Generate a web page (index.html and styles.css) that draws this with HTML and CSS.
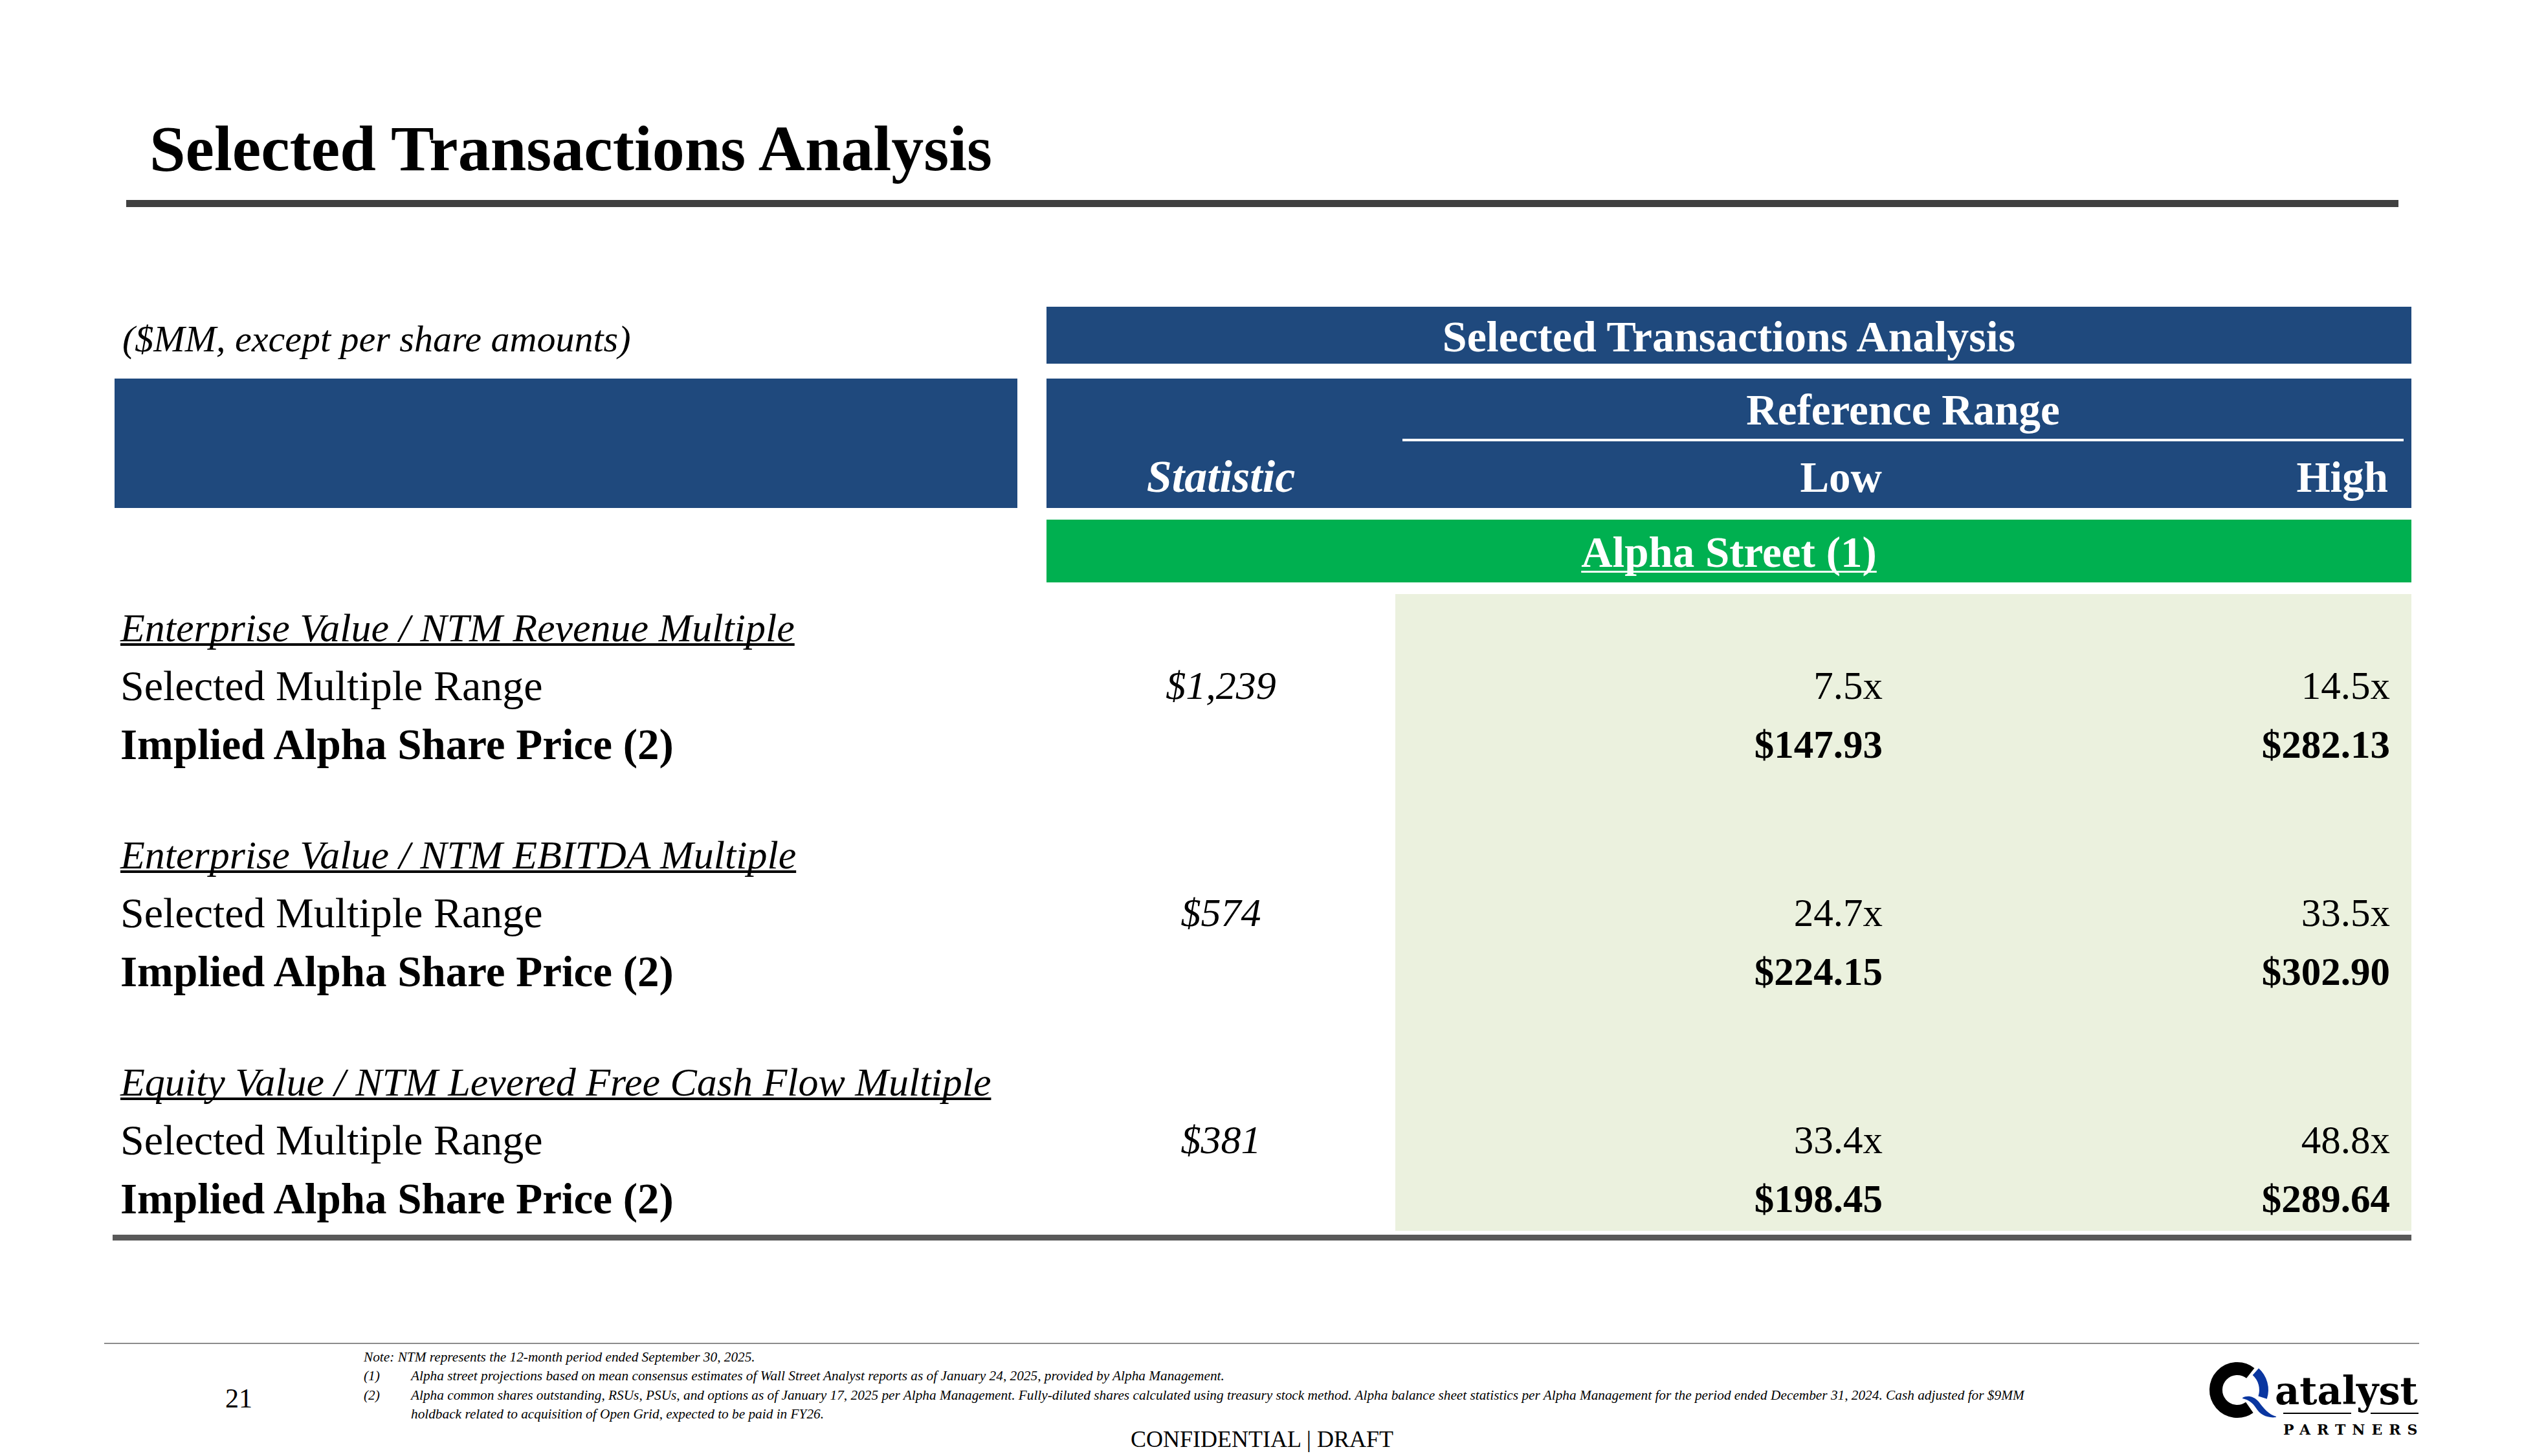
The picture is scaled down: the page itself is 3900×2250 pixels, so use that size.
FILE: index.html
```html
<!DOCTYPE html>
<html>
<head>
<meta charset="utf-8">
<title>Selected Transactions Analysis</title>
<link rel="stylesheet" href="styles.css">
</head>
<body>
<div class="page">
  <h1 class="title">Selected Transactions Analysis</h1>
  <div class="title-rule"></div>

  <div class="table">
    <div class="row row-a">
      <div class="unit">($MM, except per share amounts)</div>
      <div class="top-head">Selected Transactions Analysis</div>
    </div>

    <div class="row row-b">
      <div class="blue-left"></div>
      <div class="blue-right">
        <div class="ref">Reference Range</div>
        <div class="h-stat">Statistic</div>
        <div class="h-low">Low</div>
        <div class="h-high">High</div>
      </div>
    </div>

    <div class="row row-c">
      <div class="green"><span class="green-text">Alpha Street (1)</span></div>
    </div>

    <div class="body">
      <div class="row pt"><div class="lo"></div><div class="hi"></div></div>

      <div class="row r"><div class="lbl"><span class="lbl-h">Enterprise Value / NTM Revenue Multiple</span></div><div class="lo"></div><div class="hi"></div></div>
      <div class="row r"><div class="lbl">Selected Multiple Range</div><div class="stat">$1,239</div><div class="lo num">7.5x</div><div class="hi num">14.5x</div></div>
      <div class="row r"><div class="lbl lbl-b">Implied Alpha Share Price (2)</div><div class="lo num-b">$147.93</div><div class="hi num-b">$282.13</div></div>
      <div class="row sp"><div class="lo"></div><div class="hi"></div></div>

      <div class="row r"><div class="lbl"><span class="lbl-h">Enterprise Value / NTM EBITDA Multiple</span></div><div class="lo"></div><div class="hi"></div></div>
      <div class="row r"><div class="lbl">Selected Multiple Range</div><div class="stat">$574</div><div class="lo num">24.7x</div><div class="hi num">33.5x</div></div>
      <div class="row r"><div class="lbl lbl-b">Implied Alpha Share Price (2)</div><div class="lo num-b">$224.15</div><div class="hi num-b">$302.90</div></div>
      <div class="row sp"><div class="lo"></div><div class="hi"></div></div>

      <div class="row r"><div class="lbl"><span class="lbl-h">Equity Value / NTM Levered Free Cash Flow Multiple</span></div><div class="lo"></div><div class="hi"></div></div>
      <div class="row r"><div class="lbl">Selected Multiple Range</div><div class="stat">$381</div><div class="lo num">33.4x</div><div class="hi num">48.8x</div></div>
      <div class="row r"><div class="lbl lbl-b">Implied Alpha Share Price (2)</div><div class="lo num-b">$198.45</div><div class="hi num-b">$289.64</div></div>

      <div class="row pb"><div class="lo"></div><div class="hi"></div></div>
    </div>
    <div class="end-rule"></div>
  </div>

  <div class="foot-rule"></div>
  <div class="footer">
    <div class="pnum">21</div>
    <div class="notes">
      <div class="note-line">Note: NTM represents the 12-month period ended September 30, 2025.</div>
      <div class="fn"><span class="fn-mark">(1)</span><span class="fn-text">Alpha street projections based on mean consensus estimates of Wall Street Analyst reports as of January 24, 2025, provided by Alpha Management.</span></div>
      <div class="fn"><span class="fn-mark">(2)</span><span class="fn-text">Alpha common shares outstanding, RSUs, PSUs, and options as of January 17, 2025 per Alpha Management. Fully-diluted shares calculated using treasury stock method. Alpha balance sheet statistics per Alpha Management for the period ended December 31, 2024. Cash adjusted for $9MM<br>holdback related to acquisition of Open Grid, expected to be paid in FY26.</span></div>
    </div>
    <div class="logo">
      <svg class="qmark" width="105" height="100" viewBox="0 0 105 100">
        <path d="M 67.3 24 A 33 33 0 1 0 65.9 77" fill="none" stroke="#000" stroke-width="20"/>
        <path d="M 75.4 21.8 A 38 38 0 0 1 86.1 61.7" fill="none" stroke="#0a36a0" stroke-width="14"/>
        <path d="M 55 62 C 62 58, 72 59, 80 68 C 88 79, 96 88, 107 91 L 107 92 C 94 94, 82 88, 76 78 C 71 70, 64 65, 55 63 Z" fill="#0a36a0"/>
      </svg>
      <div class="wordmark">
        <div class="atalyst">atalyst</div>
        <div class="wm-rule"><i class="seg1"></i><i class="seg2"></i></div>
        <div class="partners">PARTNERS</div>
      </div>
    </div>
    <div class="conf">CONFIDENTIAL | DRAFT</div>
  </div>
</div>
</body>
</html>
```

FILE: styles.css
```css
* { box-sizing: border-box; }
html, body { margin: 0; padding: 0; }
body {
  width: 3900px;
  height: 2250px;
  background: #ffffff;
  color: #000000;
  font-family: "Liberation Serif", "Times New Roman", serif;
  overflow: hidden;
}
.page { padding-top: 179.5px; }

.title {
  margin: 0 0 0 231px;
  font-size: 100px;
  line-height: 100px;
  font-weight: 700;
}
.title-rule {
  margin: 29.5px 0 0 195px;
  width: 3511px;
  height: 11px;
  background: #404040;
}

.table { margin: 154px 0 0 177px; width: 3549px; }
.row {
  display: grid;
  grid-template-columns: 1395px 45px 539px 785px 785px;
}

.row-a { height: 88px; }
.unit {
  grid-column: 1;
  font-style: italic;
  font-size: 58px;
  line-height: 76px;
  padding: 12px 0 0 12px;
  white-space: nowrap;
}
.top-head {
  grid-column: 3 / 6;
  background: #1f497d;
  color: #ffffff;
  font-weight: 700;
  font-size: 68px;
  line-height: 84px;
  padding-top: 4px;
  text-align: center;
}

.row-b { margin-top: 23px; height: 200px; }
.blue-left { grid-column: 1; background: #1f497d; }
.blue-right {
  grid-column: 3 / 6;
  background: #1f497d;
  color: #ffffff;
  font-weight: 700;
  font-size: 67px;
  display: grid;
  grid-template-columns: 539px 785px 785px;
  grid-template-rows: 97px 103px;
}
.ref {
  grid-column: 2 / 4;
  grid-row: 1;
  margin: 0 12px 0 11px;
  border-bottom: 4px solid #ffffff;
  text-align: center;
  line-height: 89px;
  padding-top: 4px;
}
.h-stat, .h-low, .h-high {
  grid-row: 2;
  line-height: 96px;
  padding-top: 7px;
}
.h-stat { grid-column: 1; text-align: center; font-style: italic; font-size: 70px; }
.h-low { grid-column: 2; text-align: right; padding-right: 33px; }
.h-high { grid-column: 3; text-align: right; padding-right: 36px; }

.row-c { margin-top: 18px; }
.green {
  grid-column: 3 / 6;
  height: 97px;
  background: #00b050;
  color: #ffffff;
  font-weight: 700;
  font-size: 67px;
  line-height: 93px;
  padding-top: 4px;
  text-align: center;
}
.green-text {
  text-decoration: underline;
  text-decoration-thickness: 3px;
  text-underline-offset: 6px;
  text-decoration-skip-ink: none;
}

.body { margin-top: 18px; }
.r { height: 91px; line-height: 91px; }
.sp { height: 78px; }
.pt { height: 5px; }
.pb { height: 4px; }
.lo, .hi { background: #ebf1de; white-space: nowrap; }
.lo { grid-column: 4; text-align: right; padding-right: 32px; }
.hi { grid-column: 5; text-align: right; padding-right: 33px; }
.lbl { grid-column: 1; padding-left: 9px; font-size: 66px; white-space: nowrap; }
.lbl-h {
  font-style: italic;
  font-size: 62px;
  text-decoration: underline;
  text-decoration-thickness: 4px;
  text-underline-offset: 3px;
  text-decoration-skip-ink: none;
}
.lbl-b { font-weight: 700; font-size: 67px; }
.stat { grid-column: 3; text-align: center; font-style: italic; font-size: 62px; }
.num { font-size: 61px; }
.num-b { font-weight: 700; font-size: 61px; }

.end-rule {
  margin: 6px 0 0 -3px;
  width: 3552px;
  height: 9px;
  background: #595959;
}

.foot-rule {
  margin: 158px 0 0 161px;
  width: 3577px;
  height: 2px;
  background: #8c8c8c;
}
.footer {
  display: grid;
  grid-template-columns: 348px 214px 1fr 330px 160px;
  grid-template-rows: auto auto;
}
.pnum {
  grid-column: 2;
  grid-row: 1;
  margin-top: 63px;
  font-size: 42px;
  line-height: 42px;
}
.notes {
  grid-column: 3;
  grid-row: 1;
  margin-top: 6px;
  font-style: italic;
  font-size: 21.3px;
  line-height: 29.3px;
  white-space: nowrap;
}
.fn { display: grid; grid-template-columns: 73px 1fr; }

.logo {
  grid-column: 4;
  grid-row: 1 / 3;
  margin-top: 21px;
  display: flex;
  align-items: flex-start;
}
.qmark { flex: none; overflow: visible; }
.wordmark { display: flex; flex-direction: column; }
.atalyst {
  font-family: "DejaVu Serif", serif;
  font-weight: 700;
  font-size: 59px;
  line-height: 59px;
  padding-top: 22px;
}
.wm-rule { display: flex; margin: 4px 0 0 13px; }
.wm-rule i { display: block; height: 2px; background: #000000; }
.seg1 { width: 105px; }
.seg2 { width: 74px; margin-left: 30px; }
.partners {
  font-family: "DejaVu Serif", serif;
  font-weight: 700;
  font-size: 22px;
  line-height: 22px;
  margin: 13px 0 0 13px;
  letter-spacing: 10px;
}

.conf {
  grid-column: 1 / -1;
  grid-row: 2;
  margin-top: 5.5px;
  text-align: center;
  font-size: 36px;
  line-height: 36px;
}
```
